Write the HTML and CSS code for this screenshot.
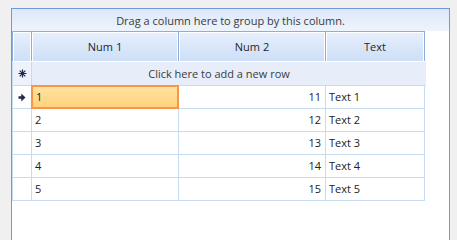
FILE: index.html
```html
<!DOCTYPE html>
<html lang="en">
<head>
    <meta charset="UTF-8">
    <title>Grid</title>
    <link rel="stylesheet" href="styles.css">
</head>
<body>
    <div class="grid">
        <div class="group-panel">Drag a column here to group by this column.</div>
        <div class="rows">
            <div class="row header">
                <div class="cell ind"></div>
                <div class="cell">Num 1</div>
                <div class="cell">Num 2</div>
                <div class="cell">Text</div>
            </div>
            <div class="row new-row">
                <div class="cell ind">
                    <svg width="9" height="9" viewBox="0 0 9 9">
                        <g stroke="#1f2a55" stroke-width="1.2">
                            <path d="M4.5 0.5v8M0.5 4.5h8M1.7 1.7l5.6 5.6M7.3 1.7l-5.6 5.6"/>
                        </g>
                    </svg>
                </div>
                <div class="cell add">Click here to add a new row</div>
            </div>
            <div class="row">
                <div class="cell ind">
                    <svg width="8" height="9" viewBox="0 0 8 9">
                        <path d="M0.5 3.3h2.8V0.5L7.5 4.5 3.3 8.5V5.7H0.5z" fill="#1f2a55"/>
                    </svg>
                </div>
                <div class="cell cur">1</div>
                <div class="cell num">11</div>
                <div class="cell">Text 1</div>
            </div>
            <div class="row">
                <div class="cell ind"></div>
                <div class="cell">2</div>
                <div class="cell num">12</div>
                <div class="cell">Text 2</div>
            </div>
            <div class="row">
                <div class="cell ind"></div>
                <div class="cell">3</div>
                <div class="cell num">13</div>
                <div class="cell">Text 3</div>
            </div>
            <div class="row">
                <div class="cell ind"></div>
                <div class="cell">4</div>
                <div class="cell num">14</div>
                <div class="cell">Text 4</div>
            </div>
            <div class="row">
                <div class="cell ind"></div>
                <div class="cell">5</div>
                <div class="cell num">15</div>
                <div class="cell">Text 5</div>
            </div>
        </div>
    </div>
</body>
</html>
```

FILE: styles.css
```css
body {
    margin: 0;
    background-color: #f0f0f0;
    font-family: "Segoe UI", "Open Sans", sans-serif;
    font-size: 11px;
    color: #222;
}

.grid {
    box-sizing: border-box;
    margin: 8px 0 0 11px;
    width: 439px;
    height: 240px;
    border: 1px solid #6d9cd8;
    border-bottom: none;
    background-color: #fff;
}

.group-panel {
    height: 22px;
    line-height: 23px;
    text-align: center;
    color: #3b3b3b;
    background: linear-gradient(#dce8fa, #eef4fc);
}

.rows {
    width: 413px;
    border-left: 1px solid #c6daf2;
}

.row {
    display: grid;
    grid-template-columns: 19px 147px 147px 99px;
    height: 23px;
}

.cell {
    box-sizing: border-box;
    border-right: 1px solid #c6daf2;
    border-bottom: 1px solid #c6daf2;
    padding: 0 3px;
    line-height: 22px;
    white-space: nowrap;
}

.cell.ind {
    display: flex;
    align-items: center;
    justify-content: center;
    padding: 0;
}

.cell.num {
    text-align: right;
    padding-right: 4px;
}

/* header */
.header {
    height: 30px;
    margin-left: -1px;
    border-left: 1px solid #8caedb;
    border-top: 1px solid #8caedb;
    border-bottom: 1px solid #8caedb;
    box-sizing: border-box;
    width: 413px;
}

.header .cell {
    border-bottom: none;
    border-right: 1px solid #8caedb;
    background: linear-gradient(#e7effc, #cddff7);
    box-shadow: inset 1px 1px 0 #fff, inset -1px 0 0 #fff;
    text-align: center;
    line-height: 29px;
    color: #1e1e2e;
}

/* new row */
.new-row {
    height: 25px;
    grid-template-columns: 19px 1fr;
    background-color: #e7eef9;
}

.new-row .cell {
    border-top: 1px solid #fff;
    line-height: 23px;
}

.new-row .ind {
    background-color: #edf2fb;
}

.new-row .add {
    margin-left: -19px;
    text-align: center;
    color: #3b3b3b;
    border-right: 1px solid #e7eef9;
}

/* current cell */
.cell.cur {
    margin-left: -1px;
    margin-top: -1px;
    border: 2px solid #f7964a;
    background: linear-gradient(#ffe3a0, #ffd27c);
    line-height: 20px;
    height: 24px;
    padding-left: 3px;
}
```
